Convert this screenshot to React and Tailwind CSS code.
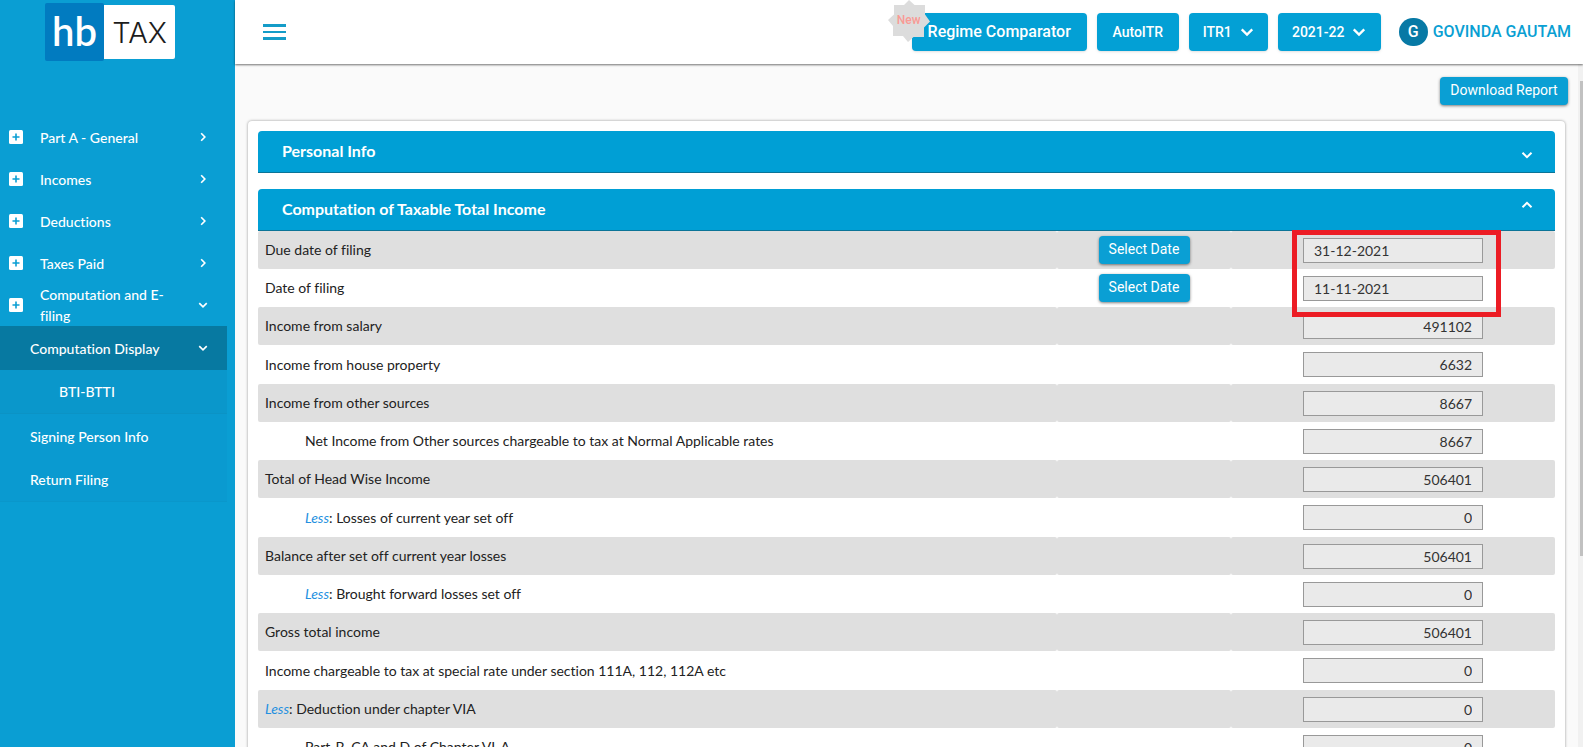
import React from 'react';
import clsx from 'clsx';

const MENU = [
  { label: 'Part A - General' },
  { label: 'Incomes' },
  { label: 'Deductions' },
  { label: 'Taxes Paid' },
  { label: 'Computation and E-filing', open: true },
];

const ROWS = [
  { id: 'due-date', label: 'Due date of filing', value: '31-12-2021', date: true },
  { id: 'filing-date', label: 'Date of filing', value: '11-11-2021', date: true },
  { id: 'salary', label: 'Income from salary', value: '491102' },
  { id: 'house', label: 'Income from house property', value: '6632' },
  { id: 'other', label: 'Income from other sources', value: '8667' },
  { id: 'other-net', label: 'Net Income from Other sources chargeable to tax at Normal Applicable rates', value: '8667', indent: true },
  { id: 'head-total', label: 'Total of Head Wise Income', value: '506401' },
  { id: 'current-loss', label: 'Losses of current year set off', value: '0', indent: true, less: true },
  { id: 'balance', label: 'Balance after set off current year losses', value: '506401' },
  { id: 'bf-loss', label: 'Brought forward losses set off', value: '0', indent: true, less: true },
  { id: 'gross', label: 'Gross total income', value: '506401' },
  { id: 'special', label: 'Income chargeable to tax at special rate under section 111A, 112, 112A etc', value: '0' },
  { id: 'via', label: 'Deduction under chapter VIA', value: '0', less: true },
  { id: 'via-parts', label: 'Part-B, CA and D of Chapter VI-A', value: '0', indent: true },
];

const ROTATION = { down: '', up: 'rotate-180', right: '-rotate-90' };

function Chevron({ dir = 'down', className }) {
  return (
    <svg viewBox="0 0 12 12" fill="none" stroke="currentColor" strokeWidth="2" className={clsx(ROTATION[dir], className)} aria-hidden="true">
      <path d="M1.5 3.8 6 8.2l4.5-4.4" />
    </svg>
  );
}

function Logo() {
  return (
    <a href="#home" className="flex items-center ml-[45px] pt-[3px]" aria-label="hb TAX">
      <span className="w-[59px] h-[58px] pb-0.5 rounded-xs bg-[#017bc0] text-white flex items-center justify-center text-[40px] leading-none font-semibold">hb</span>
      <span className="w-[71px] h-[54px] rounded-r-xs bg-white text-[#1c1c1c] flex items-center justify-center font-['Inter',sans-serif] text-[29px] leading-none font-light">TAX</span>
    </a>
  );
}

function Sidebar() {
  return (
    <aside className="w-[235px] shrink-0 bg-[#0a9ed3] text-white">
      <Logo />
      <nav className="mt-[55px] w-[227px] text-sm leading-[21px] font-medium">
        {MENU.map((item) => (
          <button key={item.label} type="button" className="flex items-center w-full h-[42px] pl-[9px] pr-[19px] text-left">
            <svg viewBox="0 0 14 14" className="w-3.5 h-3.5 shrink-0" aria-hidden="true">
              <rect width="14" height="14" rx="1.5" fill="#fff" />
              <path d="M7 3.5v7M3.5 7h7" stroke="#0a9ed3" strokeWidth="1.6" />
            </svg>
            <span className="ml-[17px] w-[140px]">{item.label}</span>
            <Chevron dir={item.open ? 'down' : 'right'} className="w-2.5 h-2.5 ml-auto" />
          </button>
        ))}
        <div className="bg-[#0a9ad0]">
          <button type="button" className="flex items-center justify-between w-full h-11 pl-[30px] pr-[19px] bg-[#0779a1]">
            Computation Display
            <Chevron className="w-2.5 h-2.5" />
          </button>
          <a href="#bti-btti" className="flex items-center h-11 pl-[59px] bg-[#0a97cb] border-b border-[#0b93c5]">BTI-BTTI</a>
          <a href="#signing" className="flex items-center h-11 pl-[30px]">Signing Person Info</a>
          <a href="#filing" className="flex items-center h-11 pl-[30px] border-b border-[#0a97cb]">Return Filing</a>
        </div>
      </nav>
    </aside>
  );
}

function HeaderButton({ children, className }) {
  return (
    <button type="button" className={clsx("h-[38px] rounded-sm bg-[#03a0d5] text-white font-['Roboto',sans-serif] font-medium shadow-sm flex items-center justify-center", className)}>
      {children}
    </button>
  );
}

function Header() {
  return (
    <header className="relative z-10 flex items-center justify-between h-16 shrink-0 bg-white pl-7 pr-3 shadow-[0_1px_2px_rgba(0,0,0,0.55)]">
      <button type="button" aria-label="Toggle menu">
        <svg viewBox="0 0 23 16" className="w-[23px] h-4" fill="#149cc8" aria-hidden="true">
          <path d="M0 0h23v3H0zM0 7h23v2H0zM0 13h23v3H0z" />
        </svg>
      </button>
      <div className="flex items-center gap-2.5">
        <div className="relative">
          <HeaderButton className="w-[175px] text-base">Regime Comparator</HeaderButton>
          <div className="absolute -left-6 -top-[13px] w-[42px] h-[42px]">
            <svg viewBox="0 0 42 42" className="absolute inset-0" fill="#dcdcdc" aria-hidden="true">
              <path d="M21 0l5.5 5H37v9.500l5 7-6 6V37H25.500L20 42l-5-6H5V26l-5-6 6-5.500V5h10z" />
            </svg>
            <span className="relative block text-center font-['Roboto',sans-serif] text-xs leading-[41px] font-medium text-[#f99a95]">New</span>
          </div>
        </div>
        <HeaderButton className="w-[82px] text-sm">AutoITR</HeaderButton>
        <HeaderButton className="w-[79px] gap-2 text-sm">ITR1 <Chevron className="w-3.5 h-3.5" /></HeaderButton>
        <HeaderButton className="w-[103px] gap-2 text-sm">2021-22 <Chevron className="w-3.5 h-3.5" /></HeaderButton>
        <a href="#profile" className="ml-2 flex items-center gap-[5px] font-['Roboto',sans-serif] text-base font-medium text-[#0a9fd3]">
          <span className="w-[29px] h-7 rounded-full bg-[#0779a5] text-white flex items-center justify-center">G</span>
          GOVINDA GAUTAM
        </a>
      </div>
    </header>
  );
}

function SectionBar({ title, open }) {
  return (
    <button
      type="button"
      aria-expanded={open}
      className="flex items-center justify-between w-full h-[42px] pl-6 pr-[22px] pb-px rounded-t-sm bg-[#009fd5] border-b border-[#0b7497] text-white text-base font-bold"
    >
      {title}
      <Chevron dir={open ? 'up' : 'down'} className={clsx('w-3 h-3', open ? 'mb-2' : 'mt-2')} />
    </button>
  );
}

function SmallButton({ children, className }) {
  return (
    <button type="button" className={clsx("h-7 pb-0.5 rounded-sm bg-[#0a9fd4] text-white font-['Roboto',sans-serif] text-sm shadow-[0_1px_3px_rgba(0,0,0,0.5)]", className)}>
      {children}
    </button>
  );
}

function ComputationTable() {
  return (
    <div className="relative">
      <table className="w-full table-fixed text-sm text-[#222]">
        <colgroup>
          <col />
          <col className="w-[174px]" />
          <col className="w-[324px]" />
        </colgroup>
        <tbody>
          {ROWS.map((row) => (
            <tr key={row.id} className="h-[38px] nth-[4n]:h-[39px] group">
              <td className={clsx('p-0 rounded-xs group-odd:bg-[#dfdfdf]', row.indent ? 'pl-[47px]' : 'pl-[7px]')}>
                <label htmlFor={row.id}>
                  {row.less && <i className="text-[#2490e0]">Less</i>}
                  {row.less && ': '}
                  {row.label}
                </label>
              </td>
              <td className="p-0 rounded-xs group-odd:bg-[#dfdfdf]">
                {row.date && <SmallButton className="block mx-auto w-[91px]">Select Date</SmallButton>}
              </td>
              <td className="p-0 rounded-xs group-odd:bg-[#dfdfdf]">
                <input
                  id={row.id}
                  readOnly
                  defaultValue={row.value}
                  className={clsx('block mx-auto w-[180px] h-[25px] px-2.5 border border-[#999] bg-[#eaeaea] text-[#333]', !row.date && 'text-right')}
                />
              </td>
            </tr>
          ))}
        </tbody>
      </table>
      {/* callout round the two filing dates */}
      <div className="absolute -top-px right-[54px] w-[209px] h-[87px] border-5 border-[#ec1c24] pointer-events-none" />
    </div>
  );
}

export default function App() {
  return (
    <div className="flex h-screen overflow-hidden bg-[#fafafa] font-['Lato',sans-serif] [font-variant-ligatures:no-common-ligatures]">
      <Sidebar />
      <div className="flex flex-col flex-1 min-w-0">
        <Header />
        <div className="flex flex-1 min-h-0">
          <main className="flex-1 min-w-0 overflow-hidden px-[13px] pt-[13px]">
            <div className="flex justify-end -mr-[3px]">
              <SmallButton className="w-32">Download Report</SmallButton>
            </div>
            <div className="mt-4 p-2.5 rounded-sm bg-white shadow-[0_0_3px_rgba(0,0,0,0.4)]">
              <SectionBar title="Personal Info" open={false} />
              <div className="mt-4">
                <SectionBar title="Computation of Taxable Total Income" open />
                <ComputationTable />
              </div>
            </div>
          </main>
          <div className="w-[5px] bg-[#f1f1f1] pl-0.5 pt-[17px]">
            <div className="h-[475px] bg-[#c1c1c1]" />
          </div>
        </div>
      </div>
    </div>
  );
}
